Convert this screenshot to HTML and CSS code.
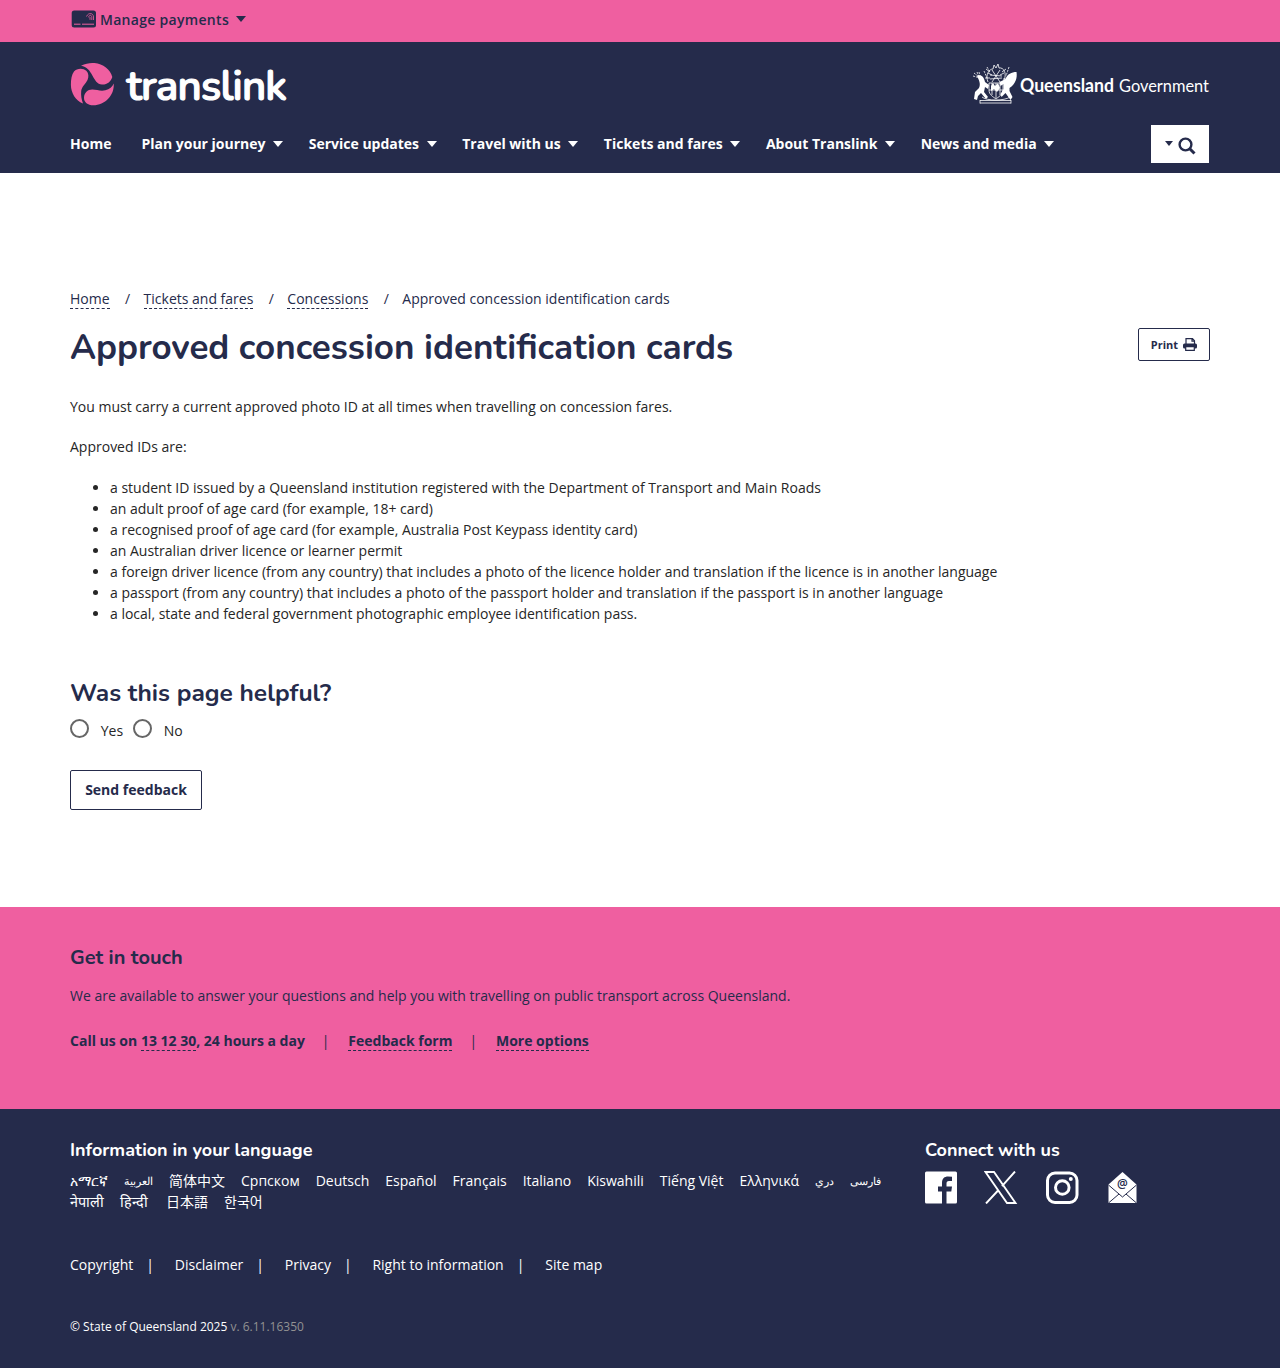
FILE: index.html
```
<!DOCTYPE html>
<html lang="en">
<head>
<meta charset="utf-8">
<title>Approved concession identification cards | Translink</title>
<link rel="stylesheet" href="styles.css">
</head>
<body>
<div class="topbar"><div class="container topbar-inner">
  <svg class="card-icon" width="26" height="18" viewBox="0 0 26 18"><rect x=".7" y=".5" width="24.3" height="17" rx="2.5" fill="#252b4b"/><path d="M3 14.2h6.500M11 14.2h12" stroke="#ef5fa0"/><path d="M15.500 6.500c2-4.500 7-3.500 7 .5v3M17.500 7.300c1-3 3.300-2.600 3.300.3V10M19 7v2.800" fill="none" stroke="#ef5fa0" stroke-width=".8"/></svg>
  <span>Manage payments</span><i class="caret"></i>
</div></div>
<header class="header"><div class="container">
  <div class="brand">
    <svg class="translink" width="240" height="46" viewBox="0 0 240 46">
      <g fill="#ef5fa0">
        <path d="M11 3.800C16 1.300 20 .6 24.500 1c8.500.7 16 6.500 17.800 14-1.300 4.500-5 7.800-10.300 7.600-9.500-.4-9-17.500-21-18.800Z"/>
        <path d="M4 9.500c3-3.500 9-3.800 12.300-.7 2.500 2.600 2.600 6.200 1.200 9.200-1.700 3.700-5.800 6.500-6.300 11-.4 4.500.3 8.500 1.800 12.500C5.500 38.500 1 31 .9 23 .8 17.500 1.800 12.500 4 9.500Z"/>
        <path d="M43.700 21.500c.9 12-8.700 21.500-20.400 21.800-5.500-.1-9.500-3-9.300-7.800.3-4.500 3.600-8 8.400-7.900 4.300.1 8.200 1.700 12.900.7 4.300-1 7.200-3.400 8.400-6.800Z"/>
      </g>
      <text x="56.500" y="37.500" textLength="160.500" class="logo-word">translink</text>
    </svg>
    <svg class="qldgov" width="237" height="44" viewBox="0 0 237 44">
      <g fill="none" stroke="#fff" stroke-width=".8">
        <path d="M7 37.500h31M7 40h31M7 37v3.500M38 37v3.500M9 34c4 4 23 4 28 0"/>
        <path d="M16 20h14v7c0 5-5 7-7 9-2.500-2-7-4-7-9zM23 20v15M16 27h14M19 20v12M27 20v12"/>
        <path d="M15 19c-3-7 1-13 5-13l1-4 2 3 2-4 1 4c5-1 8 6 5 12M17 12l12 1M17 16l12-1M19 7l8 12M27 7l-8 12M15 10l4 2M31 10l-4 2M13 6l4 3M33 6l-4 3M12 15h5M30 16h4"/>
        <path d="M1 10l5 4M0 13l7 2M4 9l3 7M6 9l2 8M36 4l-3 9M11 8l3 7M14 4l3 5" stroke-dasharray="2 1"/>
      </g>
      <path d="M4 13c4-2 7 1 8 6l4 3-1 4-3-2-1 5 4 5-2 2-5-6-3 3-1 4-3-1 1-7 4-4c2-4 0-8-2-12Z" fill="#fff"/>
      <path d="M43.500 9c1 6-1 12-7 16v3l3 6-2 3-5-7-4 4-1-3 3-5 0-5-3 2-1-4 6-3c2-5 6-7 11-7Z" fill="#fff"/>
      <path d="M18 23l2-3 2 3 3-3 2 5-3 4-3-3-3 2z" fill="#fff"/>
      <text x="47" y="28.500" textLength="94" lengthAdjust="spacingAndGlyphs" class="gov gov-bold">Queensland</text>
      <text x="146" y="28.500" textLength="90" lengthAdjust="spacingAndGlyphs" class="gov">Government</text>
    </svg>
  </div>
  <nav class="nav">
    <a>Home</a><a>Plan your journey<i class="caret"></i></a><a>Service updates<i class="caret"></i></a><a>Travel with us<i class="caret"></i></a><a>Tickets and fares<i class="caret"></i></a><a>About Translink<i class="caret"></i></a><a>News and media<i class="caret"></i></a>
    <button class="search" aria-label="Search"><i class="caret"></i><svg width="18" height="18" viewBox="0 0 18 18" fill="none" stroke="#252b4b"><circle cx="7.500" cy="7.500" r="5.900" stroke-width="2.400"/><path d="M12 12l4.500 4.500" stroke-width="3"/></svg></button>
  </nav>
</div></header>
<main class="container main">
  <div class="crumbs"><a>Home</a><span>/</span><a>Tickets and fares</a><span>/</span><a>Concessions</a><span>/</span><b>Approved concession identification cards</b></div>
  <div class="title-row">
    <h1>Approved concession identification cards</h1>
    <button class="print">Print <svg width="14" height="13" viewBox="0 0 14 13"><path d="M3 6V.7h6.500L11.500 2.700v3.300M9 1v2.200h2.500" fill="none" stroke="#252b4b" stroke-width="1.200"/><rect y="5.500" width="14" height="5" rx="1.500" fill="#252b4b"/><path d="M2.700 8.700h8.600v3.600H2.700z" fill="#fff" stroke="#252b4b" stroke-width="1.200"/></svg></button>
  </div>
  <p>You must carry a current approved photo ID at all times when travelling on concession fares.</p>
  <p>Approved IDs are:</p>
  <ul>
    <li>a student ID issued by a Queensland institution registered with the Department of Transport and Main Roads</li>
    <li>an adult proof of age card (for example, 18+ card)</li>
    <li>a recognised proof of age card (for example, Australia Post Keypass identity card)</li>
    <li>an Australian driver licence or learner permit</li>
    <li>a foreign driver licence (from any country) that includes a photo of the licence holder and translation if the licence is in another language</li>
    <li>a passport (from any country) that includes a photo of the passport holder and translation if the passport is in another language</li>
    <li>a local, state and federal government photographic employee identification pass.</li>
  </ul>
  <h2>Was this page helpful?</h2>
  <div class="radios"><label><i></i>Yes</label><label><i></i>No</label></div>
  <button class="send">Send feedback</button>
</main>
<section class="touch"><div class="container">
  <h3>Get in touch</h3>
  <p>We are available to answer your questions and help you with travelling on public transport across Queensland.</p>
  <div class="contact"><span>Call us on <a>13 12 30</a>, 24 hours a day</span><i>|</i><a>Feedback form</a><i>|</i><a>More options</a></div>
</div></section>
<footer class="footer"><div class="container">
  <div class="footer-top">
    <div class="languages"><h4>Information in your language</h4>
      <div class="lang-list"><a>አማርኛ</a><a class="arabic">العربية</a><a lang="zh">简体中文</a><a>Српском</a><a>Deutsch</a><a>Español</a><a>Français</a><a>Italiano</a><a>Kiswahili</a><a>Tiếng Việt</a><a>Ελληνικά</a><a class="arabic">دري</a><a class="arabic">فارسی</a></div>
      <div class="lang-list second"><a class="nepali">नेपाली</a><a class="hindi">हिन्दी</a><a lang="ja">日本語</a><a lang="ko">한국어</a></div>
    </div>
    <div class="connect"><h4>Connect with us</h4>
      <div class="social">
        <svg width="32" height="33" viewBox="0 0 32 33"><rect y=".5" width="32" height="32" rx="1.500" fill="#fff"/><path d="M17 33V20.500h-4V15.500h4v-3.500C17 7.500 19.500 5.500 23 5.500l4 .2v4.300h-3c-2 0-2.500 1-2.500 2.500v3H27l-.7 5h-4.800V33z" fill="#252b4b"/></svg>
        <svg width="34" height="33" viewBox="0 0 34 33"><path d="M1.500 1h8.500l21.500 31H23zM31 .5L18 15.200M14.500 19L2 32.500" fill="none" stroke="#fff" stroke-width="1.900"/></svg>
        <svg width="34" height="33" viewBox="0 0 34 33"><rect x="2.500" y="2" width="29.500" height="29.500" rx="7.500" fill="none" stroke="#fff" stroke-width="3"/><circle cx="17.300" cy="16.500" r="6.800" fill="none" stroke="#fff" stroke-width="3"/><circle cx="25.800" cy="8" r="2" fill="#fff"/></svg>
        <svg class="mail" width="29" height="33" viewBox="0 0 29 33"><path d="M.5 13.500L14.500 1l14 12.500V32H.5z" fill="#fff"/><path d="M.5 14l14 12 14-12M.5 32L11 23M28.500 32L18 23" fill="none" stroke="#252b4b"/><text x="14.500" y="16.500" text-anchor="middle" class="at">@</text></svg>
      </div>
    </div>
  </div>
  <div class="legal"><a>Copyright</a><i>|</i><a>Disclaimer</a><i>|</i><a>Privacy</a><i>|</i><a>Right to information</a><i>|</i><a>Site map</a></div>
  <div class="copy">© State of Queensland 2025 <span>v. 6.11.16350</span></div>
</div></footer>
</body>
</html>
```
FILE: styles.css
```
* { box-sizing: border-box; }
body { margin: 0; background: #fff; color: #262626; font: 14px/21px "Open Sans", "Noto Sans CJK SC", sans-serif; }
h1, h2, h3, h4, p, ul { margin: 0; }
h1, h2, h3, h4 { font-family: Nunito, Lato, sans-serif; color: #252b4b; white-space: nowrap; }
.container { width: 1140px; margin: 0 auto; }
.caret { display: inline-block; border: 5px solid transparent; border-top: 6px solid currentColor; border-bottom: 0; }
.topbar { height: 42px; background: #ef5fa0; color: #252b4b; font-weight: 600; }
.topbar-inner { height: 38px; display: flex; align-items: center; letter-spacing: .3px; }
.card-icon { margin: 0 3px 0 1px; }
.topbar .caret { margin-left: 7px; }
.header { height: 131px; background: #252b4b; color: #fff; }
.brand { display: flex; justify-content: space-between; height: 79px; padding-top: 20px; }
.logo-word { font: 600 42px Nunito, Lato, sans-serif; fill: #fff; stroke: #fff; stroke-width: 1.2px; stroke-linejoin: round; }
.qldgov { margin-top: 1px; }
.gov { font: 400 18px Lato, sans-serif; fill: #fff; }
.gov-bold { font-weight: 700; }
.nav { display: flex; font-weight: 700; height: 44px; align-items: center; gap: 25.400px; white-space: nowrap; }
.nav a:first-child { margin-right: 4.600px; }
.nav a { display: flex; align-items: center; }
.nav a .caret { margin: 1px 0 0 7.800px; }
.search { margin: 2px 1px 0 auto; width: 58px; height: 38px; background: #fff; border: 0; color: #252b4b; display: flex; align-items: center; justify-content: center; gap: 5px; padding: 3px 0 0; }
.search .caret { border-width: 5px 4.500px 0; margin-top: -4px; }
.main { height: 734px; padding-top: 115px; }
.crumbs { display: flex; color: #252b4b; }
.crumbs a { border-bottom: 1px dashed #252b4b; height: 21px; line-height: 21px; }
.crumbs span { width: 34px; text-align: center; padding-left: 2px; }
.crumbs b { font-weight: inherit; }
.title-row { display: flex; justify-content: space-between; height: 87px; padding-top: 19px; }
h1 { font-size: 35px; line-height: 40px; }
.print { width: 72px; height: 33px; font: 700 11px "Open Sans", sans-serif; background: #fff; color: #252b4b; border: 1px solid #252b4b; border-radius: 2px; display: flex; align-items: center; justify-content: center; gap: 5px; padding: 0; }
.main p { margin-bottom: 19px; }
ul { padding-left: 40px; margin-top: 20px; }
h2 { font-size: 24.500px; line-height: 32px; margin-top: 53px; }
.radios { display: flex; gap: 10px; height: 42px; margin-top: 11px; }
.radios label { display: flex; gap: 11.700px; }
.radios i { width: 19px; height: 19px; border: 2px solid #666; border-radius: 50%; margin-top: -1px; }
.send { width: 132px; height: 40px; margin-top: 8px; font: 700 14px/20px "Open Sans", sans-serif; background: #fff; color: #252b4b; border: 1px solid #252b4b; border-radius: 2px; padding: 0 0 1px; }
.touch { height: 202px; padding-top: 38px; background: #ef5fa0; color: #252b4b; }
h3 { font-size: 20px; line-height: 25px; }
.touch p { margin-top: 15px; }
.contact { display: flex; margin-top: 24px; font-weight: 700; }
.contact a { border-bottom: 1px dashed #252b4b; display: inline-block; height: 21px; }
.contact i, .legal i { font-style: normal; font-weight: 400; width: 43.500px; padding-left: 17px; }
.legal i { width: 41.500px; padding-left: 13px; }
.footer { height: 259px; background: #252b4b; color: #fff; padding-top: 29px; }
.footer-top { display: flex; height: 116px; }
.languages { width: 855px; }
h4 { color: #fff; font-size: 18px; line-height: 25px; }
.lang-list { display: flex; gap: 16px; white-space: nowrap; height: 21px; margin-top: 7px; }
.lang-list.second { margin-top: 0; }
.arabic { font-size: 11.400px; }
.nepali, .hindi { font-size: 14.400px; }
.hindi { margin-right: 2px; }
.social { display: flex; height: 33px; gap: 27px; margin-top: 8px; }
.mail { margin-left: 2px; }
.at { font: 600 12px "Open Sans", sans-serif; fill: #252b4b; }
.legal { display: flex; }
.copy { margin-top: 41px; font-size: 12px; }
.copy span { color: #929292; }
```
